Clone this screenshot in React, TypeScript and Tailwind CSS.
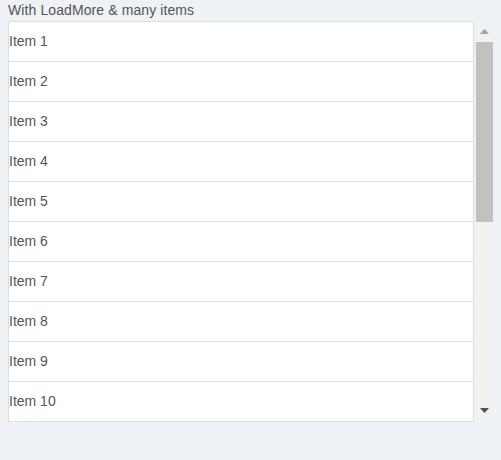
import React from "react";

const items = Array.from({ length: 10 }, (_, i) => `Item ${i + 1}`);

export default function App() {
  return (
    <div
      className="w-[501px] h-[460px] bg-[#eef2f6] pl-[8px] pt-[2px]"
      style={{ fontFamily: '"Liberation Sans", Arial, sans-serif' }}
    >
      <div className="text-[14px] leading-[17px] text-[#555] mb-[2px] tracking-[0.1px]">With LoadMore &amp; many items</div>
      <div className="flex">
        <div className="w-[466px] bg-white border-l border-t border-r border-[#ddd] rounded-tr-[3px] rounded-tl-[3px]">
          {items.map((t) => (
            <div
              key={t}
              className="h-[40px] border-b border-[#ddd] flex items-center text-[14px] text-[#555]"
            >
              {t}
            </div>
          ))}
        </div>
        <div className="ml-[1px] w-[18px] h-[401px] bg-[#f1f1f1] flex flex-col">
          <div className="h-[21px] w-full flex items-center justify-center">
            <svg width="9" height="5" viewBox="0 0 9 5">
              <polygon points="0,5 9,5 4.5,0" fill="#a3a3a3" />
            </svg>
          </div>
          <div className="w-[17px] ml-[1px] h-[180px] bg-[#c1c1c1]" />
          <div className="flex-1" />
          <div className="h-[24px] w-full flex items-center justify-center">
            <svg width="9" height="5" viewBox="0 0 9 5">
              <polygon points="0,0 9,0 4.5,5" fill="#505050" />
            </svg>
          </div>
        </div>
      </div>
    </div>
  );
}
